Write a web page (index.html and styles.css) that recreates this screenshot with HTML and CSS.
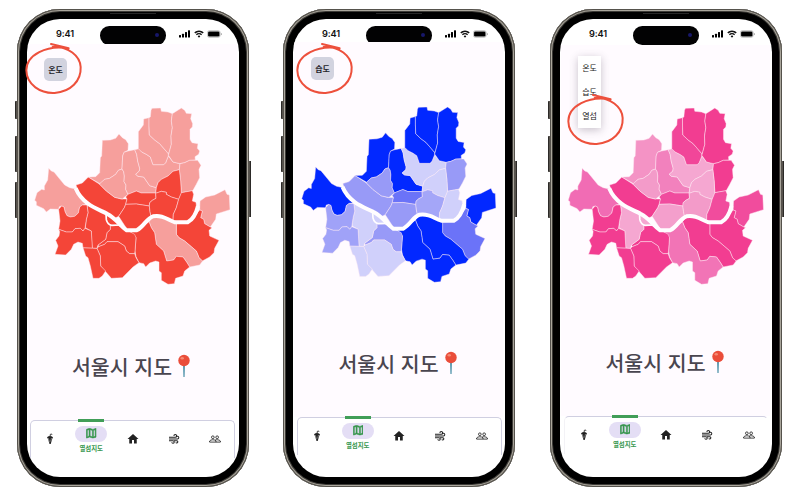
FILE: index.html
```html
<!DOCTYPE html>
<html lang="ko">
<head>
<meta charset="utf-8">
<title>서울시 지도</title>
<link rel="stylesheet" href="styles.css">
</head>
<body>
<svg class="defs" aria-hidden="true">
  <symbol id="seoul" viewBox="40 35 600 540">
    <g class="districts">
      <path class="gangseo" d="M87 222L95 230 103 233 135 272 150 280 172 285 178 300 202 330 188 332 180 338 176 356 165 366 152 368 142 364 136 352 133 338 126 335 119 337 117 345 92 344 80 353 72 343 50 333 50 322 45 318 52 295 66 285 74 287 74 275 84 257Z"/>
      <path class="mapo" d="M169 272L188 266 206 248 240 270 260 290 285 309 305 314 322 314 318 330 314 340 297 366 285 372 262 358 205 328 178 300Z"/>
      <path class="eunpyeong" d="M248 138L272 137 288 132 298 119 308 130 318 136 326 148 325 168 313 174 309 185 308 205 307 224 296 228 288 240 270 252 255 255 241 268 206 248 228 247 240 235 242 190 246 185Z"/>
      <path class="seodaemun" d="M307 224L312 232 314 245 313 262 319 272 318 285 325 300 308 314 285 309 260 290 240 270 241 267 255 255 270 252 288 240 296 228Z"/>
      <path class="jongno" d="M325 170L345 166 351 180 354 200 360 222 359 230 348 240 355 246 372 248 390 274 410 280 408 296 365 296 350 290 325 300 318 285 319 272 313 262 314 245 312 232 307 224 308 205 309 185 313 174Z"/>
      <path class="seongbuk" d="M345 166L358 163 366 173 380 180 392 188 400 211 432 211 438 205 446 185 460 203 481 208 479 226 460 231 445 245 425 255 415 265 410 280 390 274 372 248 355 246 348 240 359 230 360 222 354 200 351 180Z"/>
      <path class="gangbuk" d="M388 70L388 95 389 122 405 137 420 148 446 178 446 185 438 205 432 211 400 211 392 188 380 180 366 173 356 163 356 112 371 92 372 74Z"/>
      <path class="dobong" d="M397 42L423 41 425 51 445 53 458 58 455 80 458 100 454 125 455 150 449 172 446 178 420 148 405 137 389 122 388 95 388 70 392 68 394 48Z"/>
      <path class="nowon" d="M458 58L485 41 495 48 500 57 516 58 513 73 519 88 518 98 511 105 511 135 517 145 535 148 533 162 540 170 537 180 526 187 527 197 510 198 495 205 481 208 460 203 446 183 449 172 455 150 454 125 458 100 455 80Z"/>
      <path class="jungnang" d="M481 208L495 205 510 198 534 198 544 213 538 225 540 250 530 270 520 288 515 290 485 295 483 260 479 226Z"/>
      <path class="dongdaemun" d="M479 226L483 260 485 297 477 315 455 308 440 300 440 294 425 291 408 297 410 280 415 265 425 255 445 245 460 231Z"/>
      <path class="jung" d="M322 314L318 308 325 300 350 290 365 296 408 296 409 312 398 318 390 325 389 335 350 329 318 330Z"/>
      <path class="yongsan" d="M318 330L350 329 389 335 391 352 394 366 375 385 350 409 325 409 297 366 314 340Z"/>
      <path class="seongdong" d="M408 297L425 291 440 294 440 300 455 308 477 315 470 340 461 360 460 380 430 368 394 366 391 352 389 335 390 325 398 318 409 312Z"/>
      <path class="gwangjin" d="M485 295L518 289 522 300 518 320 529 324 531 345 510 380 470 385 460 380 461 360 470 340 477 315Z"/>
      <path class="gangdong" d="M616 286L622 300 629 302 631 346 590 359 588 375 572 398 555 388 552 375 543 370 548 350 540 347 541 320 558 308 585 302Z"/>
      <path class="songpa" d="M540 347L548 350 543 370 552 375 555 388 572 398 577 400 568 408 570 425 598 438 585 462 583 475 570 488 548 500 538 490 530 470 515 457 495 440 478 430 470 420 470 388 505 385 525 365Z"/>
      <path class="gangnam" d="M388 382L400 366 430 366 470 385 470 420 478 430 495 440 515 457 530 470 538 490 549 500 540 512 510 518 502 505 490 488 470 486 462 497 441 500 432 470 410 450 405 415 395 400Z"/>
      <path class="seocho" d="M388 382L395 400 405 415 410 450 432 470 441 500 462 497 470 486 490 488 502 505 510 518 495 530 490 545 468 552 464 568 445 570 425 558 425 535 418 530 418 503 408 500 390 506 378 518 372 508 358 505 349 487 346 470 349 430 332 412 350 409Z"/>
      <path class="dongjak" d="M272 393L295 393 325 409 345 420 349 430 346 470 345 478 330 478 320 470 315 455 295 442 262 442 255 450 237 457 235 452 258 435 262 415 272 405Z"/>
      <path class="gwanak" d="M237 457L255 450 262 442 295 442 315 455 320 470 330 478 345 478 349 490 358 505 340 518 308 550 275 552 262 537 256 530 243 515 242 485 232 462Z"/>
      <path class="geumcheon" d="M190 460L218 461 232 462 242 485 243 515 258 530 248 545 238 552 220 552 212 515 205 490 198 485Z"/>
      <path class="yeongdeungpo" d="M202 330L262 358 300 393 272 393 272 405 262 415 258 435 235 452 232 462 218 461 216 435 215 410 197 400 200 375 205 355Z"/>
      <path class="yangcheon" d="M117 345L126 335 133 338 136 352 142 364 152 368 165 366 176 356 180 338 188 332 202 332 205 355 200 375 196 402 190 410 182 402 166 403 158 413 140 413 117 405 121 380Z"/>
      <path class="guro" d="M117 405L140 413 158 413 166 403 182 402 190 410 196 402 215 410 218 461 190 460 188 447 175 443 162 450 155 465 138 482 106 480 115 455 108 438 118 425 120 412Z"/>
    </g>
    <path class="river" d="M168 282C178 306 190 317 205 328C225 343 250 351 262 358C292 374 300 394 321 408L351 408C374 396 380 372 400 366C430 360 445 378 466 384L504 384C521 375 530 355 535 335"/>
    <path class="channel" d="M259 358L260 376Q264 391 276 393L300 392"/>
  </symbol>

  <symbol id="mark" viewBox="72 120 180 165">
    <path d="M153 129L206 142C140 130 79 162 79 208C80 252 122 278 164 276C212 272 244 240 242 198C240 164 205 136 158 138"/>
  </symbol>

  <symbol id="pin" viewBox="0 0 12 24">
    <path d="M5 10h2l-.4 13h-1.200z" fill="#5596ad"/>
    <circle cx="6" cy="6.500" r="5.700" fill="#ea4d3a"/>
    <ellipse cx="4.200" cy="4.300" rx="1.700" ry="1.300" fill="#f58a72"/>
  </symbol>

  <symbol id="signal" viewBox="0 0 12 8">
    <rect x="0" y="5" width="2" height="2.500" rx=".5"/><rect x="3" y="3.700" width="2" height="3.800" rx=".5"/><rect x="6" y="2" width="2" height="5.500" rx=".5"/><rect x="9" y=".2" width="2" height="7.300" rx=".5"/>
  </symbol>
  <symbol id="wifi" viewBox="0 0 10 8">
    <path d="M.8 2.900a6 6 0 0 1 8.400 0M2.400 4.700a3.700 3.700 0 0 1 5.200 0" fill="none" stroke="#111" stroke-width="1.500"/><path d="M5 7.700L3.600 6.100a2 2 0 0 1 2.800 0z"/>
  </symbol>
  <symbol id="battery" viewBox="0 0 15 8">
    <rect x=".4" y=".7" width="12.800" height="6.600" rx="2" fill="none" stroke="#aaa" stroke-width=".7"/><rect x="1.100" y="1.400" width="11.400" height="5.200" rx="1.300"/><path d="M14 3v2.200q.9-.3.900-1.100T14 3z" fill="#999"/>
  </symbol>

  <symbol id="umbrella" viewBox="0 0 12 12">
    <path d="M6.200 3V1.900Q6.300.9 7.200 1q.8.100.8.900" fill="none" stroke="#222" stroke-width=".9"/><path d="M3 4.200Q6 2 9 4.200L8.200 6 6.700 11H5.500L4 6z"/><path d="M4.400 5.200L5.400 9.300M7.500 5L6.700 8.500" stroke="#ddd" stroke-width=".5"/>
  </symbol>
  <symbol id="mapicon" viewBox="2.500 2.500 19 19">
    <path d="M20.500 3l-.16.03L15 5.100 9 3 3.360 4.900c-.21.070-.36.25-.36.480V20.500c0 .28.220.5.500.5l.16-.03L9 18.900l6 2.100 5.640-1.900c.21-.070.36-.25.36-.480V3.500c0-.28-.22-.5-.5-.5zM10 5.470l4 1.400v11.660l-4-1.400V5.470zm-5 .99l3-1.010v11.700l-3 1.160V6.460zm14 11.080l-3 1.010V6.860l3-1.160v11.840z" stroke="#38974f" stroke-width="1"/>
  </symbol>
  <symbol id="home" viewBox="0 0 24 24"><path d="M10 21v-7h4v7h5.500v-9H23L12 2 1 12h3.500v9z"/></symbol>
  <symbol id="air" viewBox="0 0 24 24">
    <path d="M2 8.500h12.500a2.700 2.700 0 1 0-2.700-2.700M2 12h17a2.700 2.700 0 1 0-2.700-3.500M2 15.500h8a2.500 2.500 0 1 1-2.500 3M12 15.500h5.500a2.200 2.200 0 1 1-2 3.300" fill="none" stroke="#222" stroke-width="2.100"/>
  </symbol>
  <symbol id="people" viewBox="0 0 24 16">
    <g fill="none" stroke="#222" stroke-width="1.700"><circle cx="7.700" cy="4.500" r="2.700"/><circle cx="16.300" cy="4.500" r="2.700"/><path d="M1.200 14.200V12q2-2.500 6.500-2.500T14 12v2.200zM14 14.200h8.800V12q-2-2.500-6.500-2.500-2.300 0-4.200.8"/></g>
  </symbol>
</svg>

<main class="stage">
  <section class="phone temperature">
    <i class="key mute"></i><i class="key up"></i><i class="key down"></i><i class="key power"></i><i class="speaker"></i>
    <div class="screen">
      <header class="status"><span class="time">9:41</span><span class="island"><i></i></span><svg class="signal"><use href="#signal"/></svg><svg class="wifi"><use href="#wifi"/></svg><svg class="battery"><use href="#battery"/></svg></header>
      <div class="app">
        <div class="top"><button class="chip">온도</button></div>
        <svg class="map"><use href="#seoul"/></svg>
        <h1>서울시 지도<svg class="pin"><use href="#pin"/></svg></h1>
      </div>
      <nav><a><svg><use href="#umbrella"/></svg></a><a class="active"><span class="pill"><svg><use href="#mapicon"/></svg></span><b>열섬지도</b></a><a><svg><use href="#home"/></svg></a><a><svg><use href="#air"/></svg></a><a><svg><use href="#people"/></svg></a></nav>
    </div>
    <svg class="mark"><use href="#mark"/></svg>
  </section>

  <section class="phone humidity">
    <i class="key mute"></i><i class="key up"></i><i class="key down"></i><i class="key power"></i><i class="speaker"></i>
    <div class="screen">
      <header class="status"><span class="time">9:41</span><span class="island"><i></i></span><svg class="signal"><use href="#signal"/></svg><svg class="wifi"><use href="#wifi"/></svg><svg class="battery"><use href="#battery"/></svg></header>
      <div class="app">
        <div class="top"><button class="chip">습도</button></div>
        <svg class="map"><use href="#seoul"/></svg>
        <h1>서울시 지도<svg class="pin"><use href="#pin"/></svg></h1>
      </div>
      <nav><a><svg><use href="#umbrella"/></svg></a><a class="active"><span class="pill"><svg><use href="#mapicon"/></svg></span><b>열섬지도</b></a><a><svg><use href="#home"/></svg></a><a><svg><use href="#air"/></svg></a><a><svg><use href="#people"/></svg></a></nav>
    </div>
    <svg class="mark"><use href="#mark"/></svg>
  </section>

  <section class="phone heat">
    <i class="key mute"></i><i class="key up"></i><i class="key down"></i><i class="key power"></i><i class="speaker"></i>
    <div class="screen">
      <header class="status"><span class="time">9:41</span><span class="island"><i></i></span><svg class="signal"><use href="#signal"/></svg><svg class="wifi"><use href="#wifi"/></svg><svg class="battery"><use href="#battery"/></svg></header>
      <div class="app">
        <div class="top"><ul class="menu"><li>온도</li><li>습도</li><li>열섬</li></ul></div>
        <svg class="map"><use href="#seoul"/></svg>
        <h1>서울시 지도<svg class="pin"><use href="#pin"/></svg></h1>
      </div>
      <nav><a><svg><use href="#umbrella"/></svg></a><a class="active"><span class="pill"><svg><use href="#mapicon"/></svg></span><b>열섬지도</b></a><a><svg><use href="#home"/></svg></a><a><svg><use href="#air"/></svg></a><a><svg><use href="#people"/></svg></a></nav>
    </div>
    <svg class="mark"><use href="#mark"/></svg>
  </section>
</main>
</body>
</html>
```
FILE: styles.css
```css
* { box-sizing: border-box; }
body { margin: 0; background: #fff; overflow: hidden; font-family: Inter, "Noto Sans CJK KR", sans-serif; color: #222; }
.defs { position: absolute; width: 0; height: 0; }
.stage { display: flex; gap: 34px; height: 496px; padding: 9px 0 0 17px; }

/* Device frame */
.phone {
  position: relative; flex: none; width: 232px; height: 478px; padding: 10px;
  border-radius: 43px; background: #000;
  box-shadow: inset 0 0 0 1px #55524c, inset 0 0 0 2px #aaa69c, inset 0 0 0 3px #3d3b37;
}
.screen { display: flex; flex-direction: column; width: 212px; height: 458px; border-radius: 33px; background: #fff; overflow: hidden; }
.speaker { position: absolute; top: 4px; left: 93px; width: 46px; height: 1px; background: #282828; }
.key { position: absolute; left: -2px; width: 3px; background: #57534d; border-left: 1px solid #2c2a28; border-radius: 1px 0 0 1px; }
.mute { top: 92px; height: 18px; }
.up { top: 127px; height: 36px; }
.down { top: 173px; height: 36px; }
.power { left: auto; right: -2px; top: 152px; height: 56px; border-left: 0; border-right: 1px solid #2c2a28; }

/* Status bar */
.status { flex: none; display: flex; align-items: flex-start; height: var(--status-h); padding: 7px 0 0 29px; overflow: hidden; }
.time { width: 44px; padding-top: 1px; font: 600 9.200px/13px Inter, sans-serif; letter-spacing: -.1px; color: #111; }
.island { display: flex; justify-content: flex-end; align-items: center; width: 66px; height: 18.500px; padding-right: 7px; border-radius: 9.250px; background: #020203; }
.island i { width: 4px; height: 4px; border-radius: 50%; background: #17176a; }
.signal { width: 12px; height: 8px; margin: 4px 3px 0 12.500px; }
.wifi { width: 10px; height: 8px; margin: 4px 3px 0 0; }
.battery { width: 15px; height: 8px; margin-top: 4px; }

/* Page content */
.app { flex: none; display: flex; flex-direction: column; height: var(--app-h); margin: 0 2px 0 1px; background: #fffbff; }
.top { flex: none; height: var(--top-h); padding: var(--control-y) 0 0 var(--control-x); }
.chip { display: flex; align-items: center; justify-content: center; width: 23px; height: 23px; padding: 0; border: 0; border-radius: 5px; background: #d2d3df; font: 700 8px/12px "Noto Sans CJK KR", sans-serif; color: #24242a; white-space: nowrap; }
.menu { width: 23px; height: 72px; margin: 0; padding: 0; list-style: none; background: #fff; box-shadow: 0 2px 8px rgba(70, 60, 80, .3); }
.menu li { display: flex; align-items: center; justify-content: center; height: 24px; font: 400 8px/12px "Noto Sans CJK KR", sans-serif; color: #222; white-space: nowrap; }
.map { flex: none; width: var(--map-w); height: var(--map-h); margin-left: var(--map-x); }
h1 { display: flex; align-items: center; height: 30px; margin: var(--title-gap) 0 0 var(--title-x); font: 500 20.500px/30px "Noto Sans CJK KR", sans-serif; color: #49454f; white-space: nowrap; }
.pin { width: 12px; height: 24px; margin-left: 6px; }

/* Bottom navigation */
nav { flex: none; display: grid; grid-template-columns: repeat(5, 41.250px); justify-content: center; width: var(--nav-w); height: 38px; margin-left: var(--nav-x); border: 1.500px solid #d0cfe1; border-bottom: 0; border-radius: 5px 5px 0 0; box-shadow: 0 -3px 0 -1px #fffbff; }
nav a { display: flex; flex-direction: column; align-items: center; justify-content: center; }
nav a > svg { width: 12px; height: 12px; fill: #222; }
.active { position: relative; justify-content: flex-start; padding-top: 5px; color: #38974f; }
.active::before { content: ""; position: absolute; top: -2px; width: 26px; height: 3px; background: #419e58; }
.pill { display: flex; flex: none; align-items: center; justify-content: center; width: 32px; height: 16px; border-radius: 8px; background: #e4def5; }
.pill svg { width: 10.500px; height: 10.500px; fill: #38974f; }
.active b { margin-top: 2.500px; font: 700 6.400px/9px "Noto Sans CJK KR", sans-serif; white-space: nowrap; }

/* Hand-drawn callouts */
.mark { position: absolute; left: var(--mark-x); top: var(--mark-y); width: 60px; height: 55px; fill: none; stroke: #ed503c; stroke-width: 6; stroke-linecap: round; stroke-linejoin: round; }

/* Map districts */
.districts { stroke: rgba(255, 235, 245, .55); stroke-width: 2.500; stroke-linejoin: round; }
.river, .channel { fill: none; stroke: #fffdff; }
.river { stroke-width: 12; }
.channel { stroke-width: 5; }
.gangseo { fill: var(--gangseo, var(--base)); }
.mapo { fill: var(--mapo, var(--base)); }
.eunpyeong { fill: var(--eunpyeong, var(--base)); }
.seodaemun { fill: var(--seodaemun, var(--base)); }
.jongno { fill: var(--jongno, var(--base)); }
.seongbuk { fill: var(--seongbuk, var(--base)); }
.gangbuk { fill: var(--gangbuk, var(--base)); }
.dobong { fill: var(--dobong, var(--base)); }
.nowon { fill: var(--nowon, var(--base)); }
.jungnang { fill: var(--jungnang, var(--base)); }
.dongdaemun { fill: var(--dongdaemun, var(--base)); }
.jung { fill: var(--jung, var(--base)); }
.yongsan { fill: var(--yongsan, var(--base)); }
.seongdong { fill: var(--seongdong, var(--base)); }
.gwangjin { fill: var(--gwangjin, var(--base)); }
.gangdong { fill: var(--gangdong, var(--base)); }
.songpa { fill: var(--songpa, var(--base)); }
.gangnam { fill: var(--gangnam, var(--base)); }
.seocho { fill: var(--seocho, var(--base)); }
.dongjak { fill: var(--dongjak, var(--base)); }
.gwanak { fill: var(--gwanak, var(--base)); }
.geumcheon { fill: var(--geumcheon, var(--base)); }
.yeongdeungpo { fill: var(--yeongdeungpo, var(--base)); }
.yangcheon { fill: var(--yangcheon, var(--base)); }
.guro { fill: var(--guro, var(--base)); }

.temperature {
  --status-h: 25px; --app-h: 375.500px; --top-h: 62px; --control-x: 16px; --control-y: 14px;
  --map-w: 200px; --map-h: 180px; --map-x: 5.300px; --title-gap: 64.500px; --title-x: 44px;
  --nav-x: 3px; --nav-w: 205px; --mark-x: 7px; --mark-y: 31.500px;
  --base: #f44538; --light: #f69f9c;
  --gangseo: var(--light); --eunpyeong: var(--light); --seodaemun: var(--light); --jongno: var(--light);
  --seongbuk: var(--light); --gangbuk: var(--light); --dobong: var(--light); --nowon: var(--light);
  --jungnang: var(--light); --gangdong: var(--light); --gangnam: var(--light);
}
.humidity {
  --status-h: 23px; --app-h: 374.500px; --top-h: 63px; --control-x: 17px; --control-y: 15px;
  --map-w: 199px; --map-h: 179px; --map-x: 5.700px; --title-gap: 63.500px; --title-x: 44.500px;
  --nav-x: 3.500px; --nav-w: 205px; --mark-x: 12px; --mark-y: 31.500px;
  --base: #0228ff;
  --mapo: #989af7; --seodaemun: #989af7; --seongbuk: #d0d0fb; --dongdaemun: #d0d0fb; --jungnang: #989af7;
  --jung: #6b73f8; --yongsan: #989af7; --seongdong: #a4a6f8; --gwangjin: #d0d0fb; --songpa: #6b73f8;
  --dongjak: #989af7; --gwanak: #d0d0fb; --geumcheon: #d0d0fb; --yeongdeungpo: #d0d0fb;
  --yangcheon: #a0a2f8; --guro: #a0a2f8;
}
.heat {
  margin-left: 1px;
  --status-h: 26px; --app-h: 370.500px; --top-h: 61px; --control-x: 17px; --control-y: 11px;
  --map-w: 201px; --map-h: 180px; --map-x: 5px; --title-gap: 60.500px; --title-x: 44.500px;
  --nav-x: 4px; --nav-w: 204px; --mark-x: 16.200px; --mark-y: 83px;
  --base: #f23d91;
  --gangseo: #f16cb4; --eunpyeong: #f493c5; --seodaemun: #f39bc9; --jongno: #f281bd; --seongbuk: #f5a7d1;
  --gangbuk: #f14699; --dongdaemun: #f5a7d1; --jung: #f04c9e; --yongsan: #f49fcc; --seongdong: #f39bc9;
  --gwangjin: #f14c9d; --gangdong: #f14c9d; --seocho: #f274b6; --yeongdeungpo: #f5a7d1;
}
.heat nav { border-left-color: #f3f2f6; border-right-color: transparent; }
```
